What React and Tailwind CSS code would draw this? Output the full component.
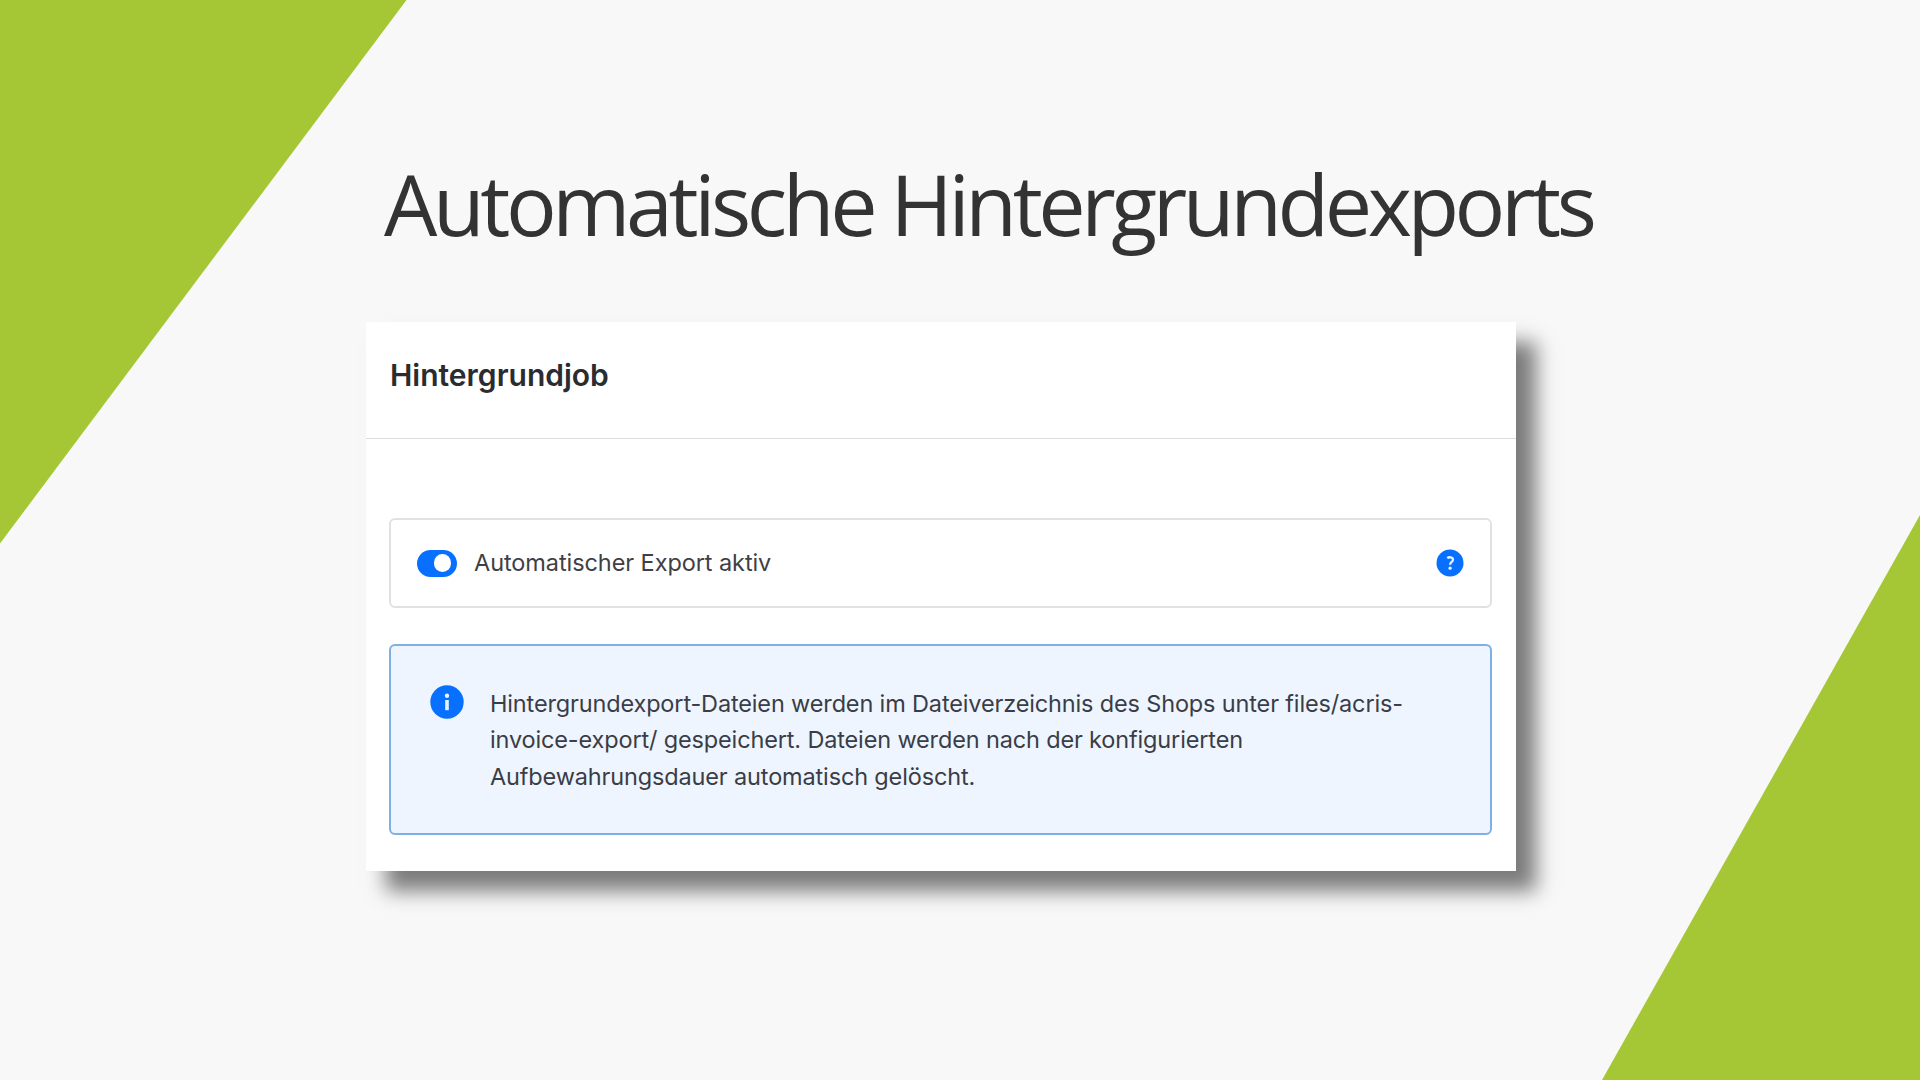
import React from "react";

const infoLines = [
  "Hintergrundexport-Dateien werden im Dateiverzeichnis des Shops unter files/acris-",
  "invoice-export/ gespeichert. Dateien werden nach der konfigurierten",
  "Aufbewahrungsdauer automatisch gelöscht.",
];

const Toggle = () => (
  <span
    role="switch"
    aria-checked="true"
    className="flex h-[27px] w-10 shrink-0 items-center justify-end rounded-full bg-[#0870ff] pr-[6px]"
  >
    <span className="h-[18px] w-[17px] rounded-full bg-white" />
  </span>
);

const HelpIcon = () => (
  <svg viewBox="0 0 28 28" className="h-7 w-7 shrink-0">
    <circle cx="14" cy="14" r="13.5" fill="#0870ff" />
    <path
      d="M11.2 9.2c1.6-1.4 5.8-1.5 5.8 1.5 0 2.3-2.9 2.3-2.9 5"
      fill="none"
      stroke="#e4f3ff"
      strokeWidth="2.3"
    />
    <circle cx="14.1" cy="19.2" r="1.6" fill="#e4f3ff" />
  </svg>
);

const InfoIcon = () => (
  <svg viewBox="0 0 34 34" className="h-[34px] w-[34px] shrink-0">
    <circle cx="17" cy="17" r="16.7" fill="#0870ff" />
    <circle cx="17" cy="10.7" r="2.2" fill="#e4f3ff" />
    <path d="M17 15v10.2" stroke="#e4f3ff" strokeWidth="3.6" />
  </svg>
);

const App = () => {
  return (
    <main className="relative h-[1080px] w-[1920px] overflow-hidden bg-[#f8f8f8]">
      {/* Green corners */}
      <svg
        viewBox="0 0 1920 1080"
        className="absolute inset-0 h-full w-full"
        aria-hidden="true"
      >
        <polygon points="0,0 406.5,0 0,543.5" fill="#a5c736" />
        <polygon points="1920,515 1920,1080 1602,1080" fill="#a5c736" />
      </svg>

      <div className="relative flex flex-col items-start pl-[366px] pt-[146px]">
        <h1 className="ml-[18px] h-[176px] whitespace-nowrap font-['Open_Sans',sans-serif] text-[84.4px] leading-[115px] tracking-[-4.42px] text-[#333333]">
          Automatische Hintergrundexports
        </h1>

        <section className="h-[549px] w-[1150px] bg-white font-['Inter',sans-serif] shadow-[20px_20px_19px_rgba(0,0,0,0.5)]">
          <header className="flex h-[117px] items-start border-b border-[#dcdddf] pl-6 pt-[33px]">
            <h2 className="whitespace-nowrap text-[30px] font-semibold leading-10 text-[#2b2c30]">
              Hintergrundjob
            </h2>
          </header>

          <div className="pl-[23px] pr-6 pt-[79px]">
            {/* Switch row */}
            <div className="flex h-[90px] items-center rounded-md border-2 border-[#e0e1e3] px-[26px]">
              <Toggle />
              <span className="ml-[17px] flex-1 whitespace-nowrap text-[23.5px] leading-8 tracking-[-0.08px] text-[#3f4045]">
                Automatischer Export aktiv
              </span>
              <HelpIcon />
            </div>

            {/* Info banner */}
            <div className="mt-9 flex h-[191px] items-start rounded-md border-2 border-[#7fb0e2] bg-[#eef5ff] pl-[39px] pt-[39px]">
              <InfoIcon />
              <p className="ml-[26px] mt-px whitespace-nowrap text-[23.5px] leading-[36.3px] tracking-[-0.15px] text-[#3a3d46]">
                {infoLines.map((line) => (
                  <span key={line} className="block">
                    {line}
                  </span>
                ))}
              </p>
            </div>
          </div>
        </section>
      </div>
    </main>
  );
};

export default App;
